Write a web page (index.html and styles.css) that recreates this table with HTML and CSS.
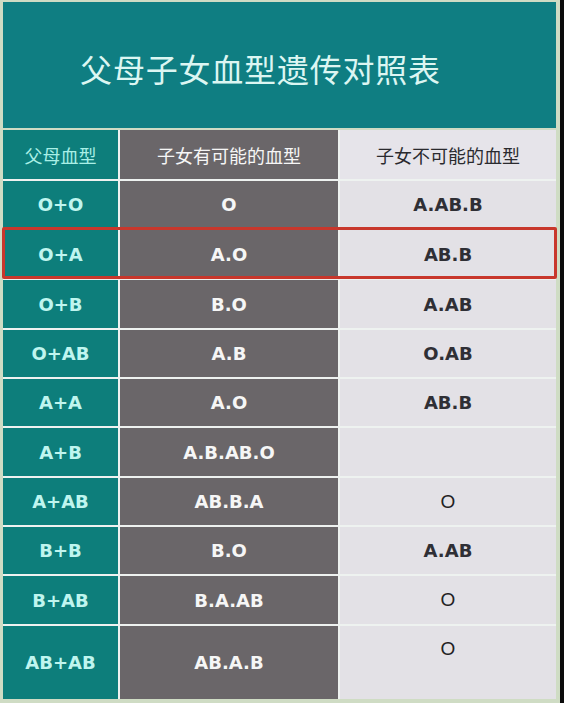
FILE: index.html
```html
<!DOCTYPE html>
<html lang="zh">
<head>
<meta charset="utf-8">
<link rel="stylesheet" href="styles.css">
</head>
<body>
<div class="frame">
  <div class="title">父母子女血型遗传对照表</div>
  <div class="table">
    <div class="cell c1 head">父母血型</div>
    <div class="cell c2 head">子女有可能的血型</div>
    <div class="cell c3 head">子女不可能的血型</div>

    <div class="cell c1">O+O</div><div class="cell c2">O</div><div class="cell c3">A.AB.B</div>
    <div class="cell c1">O+A</div><div class="cell c2">A.O</div><div class="cell c3">AB.B</div>
    <div class="cell c1">O+B</div><div class="cell c2">B.O</div><div class="cell c3">A.AB</div>
    <div class="cell c1">O+AB</div><div class="cell c2">A.B</div><div class="cell c3">O.AB</div>
    <div class="cell c1">A+A</div><div class="cell c2">A.O</div><div class="cell c3">AB.B</div>
    <div class="cell c1">A+B</div><div class="cell c2">A.B.AB.O</div><div class="cell c3"></div>
    <div class="cell c1">A+AB</div><div class="cell c2">AB.B.A</div><div class="cell c3 thin">O</div>
    <div class="cell c1">B+B</div><div class="cell c2">B.O</div><div class="cell c3">A.AB</div>
    <div class="cell c1">B+AB</div><div class="cell c2">B.A.AB</div><div class="cell c3 thin">O</div>
    <div class="cell c1">AB+AB</div><div class="cell c2">AB.A.B</div><div class="cell c3 thin top">O</div>

    <div class="highlight"></div>
  </div>
</div>
</body>
</html>
```

FILE: styles.css
```css
html, body {
  margin: 0;
  padding: 0;
  background: #0b0b0b;
}

.frame {
  width: 553px;
  height: 697px;
  padding: 2px 4px 4px 3px;
  background: #cfdcc4;
  display: flex;
  flex-direction: column;
  gap: 2px;
}

.title {
  height: 126px;
  flex: none;
  background: #0f7e82;
  color: #dcf6f2;
  font-family: "Noto Sans CJK SC", sans-serif;
  font-size: 32px;
  font-weight: 400;
  letter-spacing: 0.8px;
  display: flex;
  align-items: center;
  justify-content: center;
  padding: 5px 38px 0 0;
  box-sizing: border-box;
}

.table {
  position: relative;
  display: grid;
  grid-template-columns: 115px 218px 216px;
  grid-template-rows: 49px 47px 48px 48px 47px 47px 48px 47px 47px 48px 73px;
  column-gap: 2px;
  row-gap: 2px;
  background: #eef2f0;
}

.cell {
  display: flex;
  align-items: center;
  justify-content: center;
  font-family: "DejaVu Sans", sans-serif;
  font-weight: 700;
  font-size: 18px;
}

.c1 {
  background: #0d7e7b;
  color: #bff5ef;
}

.c2 {
  background: #6a6669;
  color: #f6f6f6;
}

.c3 {
  background: #e3e1e6;
  color: #2f2f35;
}

.c3.thin {
  font-family: "Liberation Sans", sans-serif;
  font-weight: 400;
  font-size: 19px;
  color: #222;
}

.c3.top {
  align-items: flex-start;
  padding-top: 12px;
}

.head {
  font-family: "Noto Sans CJK SC", sans-serif;
  font-weight: 400;
  font-size: 18px;
}

.head.c1 {
  color: #a9efe6;
}

.head.c3 {
  background: #e6e4ea;
  color: #2a2a2e;
}

.highlight {
  position: absolute;
  left: -1px;
  top: 97px;
  width: 549px;
  height: 46px;
  border: 3px solid #c8372c;
  border-radius: 2px;
}
```
